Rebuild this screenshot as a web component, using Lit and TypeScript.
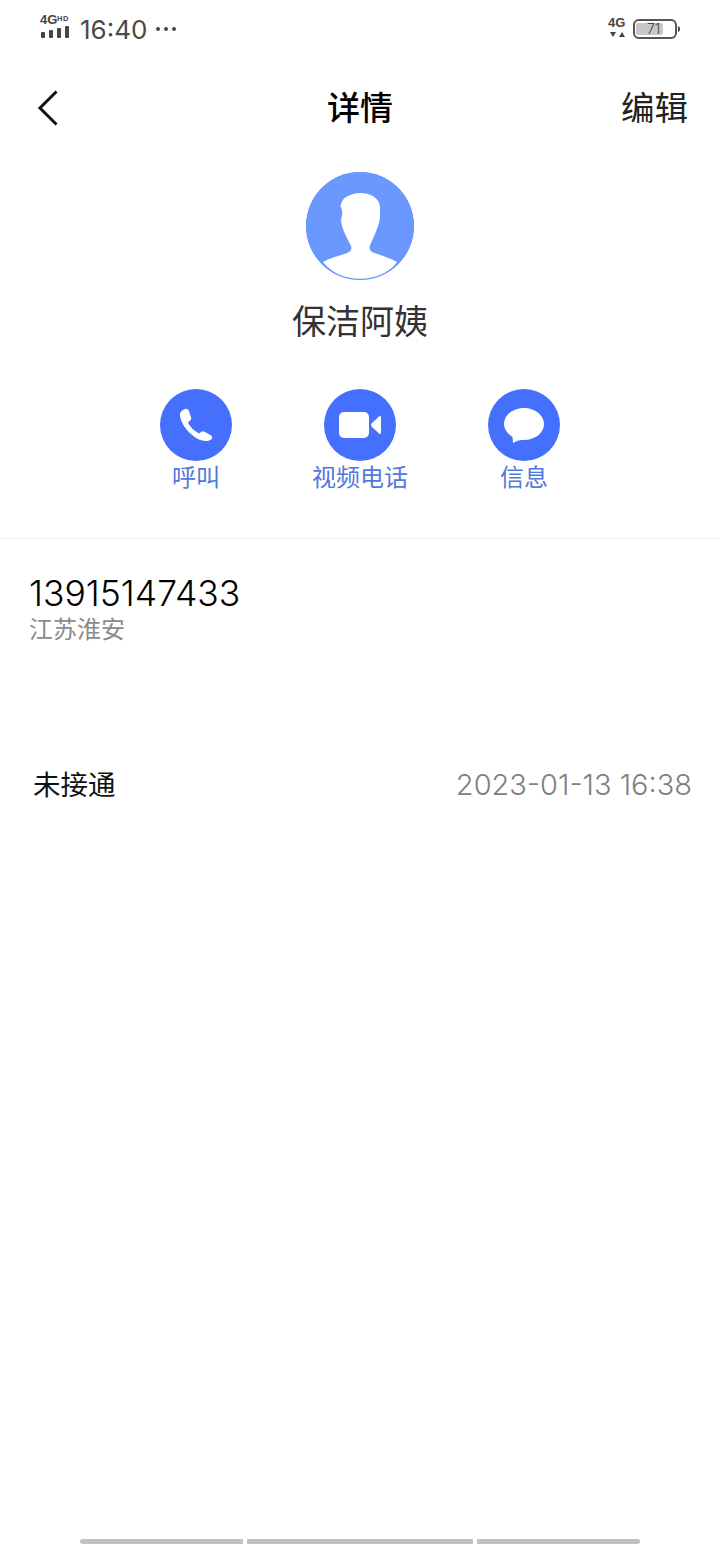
import { LitElement, html, css } from "lit";
import { customElement } from "lit/decorators.js";

@customElement("app-root")
export class AppRoot extends LitElement {
  static styles = css`
    :host {
      display: block;
      width: 720px;
      height: 1544px;
      background: #fff;
      font-family: Inter, "Noto Sans CJK SC", sans-serif;
      position: relative;
      overflow: hidden;
    }
    .status {
      height: 58px;
      display: flex;
      align-items: center;
      padding: 0 40px;
      box-sizing: border-box;
    }
    .signal {
      width: 32px;
      height: 30px;
      display: block;
      overflow: visible;
    }
    .time {
      font-size: 26px;
      font-weight: 400;
      line-height: 30px;
      margin-left: 8px;
      margin-top: 2px;
      color: #4a4a4a;
    }
    .dots {
      display: flex;
      gap: 4px;
      margin-left: 9px;
    }
    .dots i {
      width: 4px;
      height: 4px;
      border-radius: 50%;
      background: #444;
    }
    .spacer {
      flex: 1;
    }
    .net {
      width: 20px;
      height: 26px;
      display: block;
      margin-right: 5px;
      overflow: visible;
    }
    .battery {
      width: 47px;
      height: 20px;
      display: block;
      overflow: visible;
    }
    .nav {
      height: 100px;
      display: grid;
      grid-template-columns: 1fr auto 1fr;
      align-items: center;
      padding: 0 32px;
    }
    .back {
      width: 24px;
      height: 38px;
      display: block;
      margin-left: 4px;
    }
    .nav h1 {
      margin: 0;
      font-size: 33px;
      font-weight: 500;
      color: #000;
      line-height: 40px;
    }
    .edit {
      justify-self: end;
      font-size: 33.500px;
      color: #222;
      line-height: 40px;
    }
    .profile {
      display: flex;
      flex-direction: column;
      align-items: center;
      margin-top: 14px;
    }
    .avatar {
      width: 108px;
      height: 108px;
      display: block;
    }
    .name {
      font-size: 34px;
      line-height: 44px;
      margin-top: 20px;
      color: #333;
    }
    .actions {
      display: grid;
      grid-template-columns: repeat(3, 164px);
      justify-content: center;
      margin-top: 45px;
    }
    .action {
      display: flex;
      flex-direction: column;
      align-items: center;
    }
    .circle {
      width: 72px;
      height: 72px;
      display: block;
    }
    .label {
      font-size: 24px;
      line-height: 34px;
      color: #5278dc;
    }
    .divider {
      height: 1px;
      background: #eee;
      margin-top: 43px;
    }
    .number {
      padding: 36px 0 0 29px;
    }
    .phone {
      font-size: 35.500px;
      font-weight: 300;
      line-height: 38px;
      color: #000;
    }
    .place {
      font-size: 24px;
      line-height: 34px;
      color: #8a8a8a;
    }
    .record {
      display: flex;
      justify-content: space-between;
      align-items: center;
      padding: 0 28px 0 33px;
      margin-top: 118px;
      height: 40px;
    }
    .state {
      font-size: 27.500px;
      line-height: 40px;
      color: #111;
    }
    .when {
      font-size: 29px;
      font-weight: 300;
      line-height: 40px;
      color: #808080;
    }
    .home {
      position: absolute;
      left: 80px;
      top: 1539px;
      width: 560px;
      height: 5px;
      display: flex;
      gap: 4px;
    }
    .home i {
      background: #c2c2c2;
      display: block;
      height: 5px;
    }
    .home i:first-child {
      width: 163px;
      border-radius: 3px 0 0 3px;
    }
    .home i:nth-child(2) {
      width: 226px;
    }
    .home i:last-child {
      width: 163px;
      border-radius: 0 3px 3px 0;
    }
  `;

  render() {
    return html`
      <div class="status">
        <svg class="signal" viewBox="0 0 32 30">
          <text x="0" y="10" font-family="Liberation Sans" font-weight="700" font-size="13" fill="#444">4G</text>
          <text x="17" y="7" font-family="Liberation Sans" font-weight="700" font-size="7.500" letter-spacing="0.500" fill="#444">HD</text>
          <rect x="1" y="18" width="4" height="6" rx="1" fill="#444" />
          <rect x="9" y="16" width="4" height="8" rx="1" fill="#444" />
          <rect x="17" y="14" width="4" height="10" rx="1" fill="#444" />
          <rect x="25" y="12" width="4" height="12" rx="1" fill="#444" />
        </svg>
        <span class="time">16:40</span>
        <span class="dots"><i></i><i></i><i></i></span>
        <span class="spacer"></span>
        <svg class="net" viewBox="0 0 20 26">
          <text x="0" y="11" font-family="Liberation Sans" font-weight="700" font-size="13" fill="#444">4G</text>
          <path d="M2 16h6l-3 5zM14 16l3 5h-6z" fill="#444" />
        </svg>
        <svg class="battery" viewBox="0 0 47 20">
          <rect x="1" y="1" width="42" height="18" rx="5" fill="#fff" stroke="#555" stroke-width="2" />
          <rect x="3" y="4" width="27" height="12" rx="2" fill="#c8c8c8" />
          <path d="M45 7c1.500.5 2 1.500 2 3s-.5 2.500-2 3z" fill="#444" />
          <text x="14" y="15" font-family="Inter" font-weight="300" font-size="14" fill="#444">71</text>
        </svg>
      </div>

      <div class="nav">
        <svg class="back" viewBox="0 0 24 38">
          <path d="M20.500 2.500 4 19l16.500 16.500" fill="none" stroke="#111" stroke-width="3" />
        </svg>
        <h1>详情</h1>
        <span class="edit">编辑</span>
      </div>

      <div class="profile">
        <svg class="avatar" viewBox="0 0 108 108">
          <defs>
            <clipPath id="disc"><circle cx="54" cy="54" r="54" /></clipPath>
          </defs>
          <circle cx="54" cy="54" r="54" fill="#6b98fe" />
          <g clip-path="url(#disc)">
            <path
              fill="#fff"
              d="M17 90C24 86 33 84 41 81 45 80 46 77 45 74L40 64C37 58 35 52 35 47 36 45 36.500 42 36 38L34.500 34C36 28 38 26 42 24 46 22 50 21 54 21 59 21 63 22 67 24 71 27 74 30 74 36V46C73 52 71 57 69 62L65 71C63 75 63 78 66 80 74 83 84 86 91 90 84 100 70 108 54 108 38 108 25 100 17 90Z"
            />
            <circle cx="54" cy="54" r="53.500" fill="none" stroke="#6b98fe" stroke-width="1.500" />
          </g>
        </svg>
        <div class="name">保洁阿姨</div>

        <div class="actions">
          <div class="action">
            <svg class="circle" viewBox="0 0 72 72">
              <circle cx="36" cy="36" r="36" fill="#4570fd" />
              <path
                fill="#fff"
                d="M20 25C20 23 22 21 25 20 27 19.500 28 20 29 22L31 28C31.500 30 31 31 29.500 32L28 33.500C30 38 34 42 39 44.500L41 43C42 42 43.500 42 45 43L50.500 46C52 47 52.500 48 52 49.500 51 51 49 52 47 52 42 52.500 36 50 31 45 25 40 20 32 20 25Z"
              />
            </svg>
            <span class="label">呼叫</span>
          </div>
          <div class="action">
            <svg class="circle" viewBox="0 0 72 72">
              <circle cx="36" cy="36" r="36" fill="#4570fd" />
              <rect x="15" y="23" width="30" height="26" rx="5" fill="#fff" />
              <path d="M47.500 34.500 55 27.500C56 26.500 57 27 57 28.500V43.500C57 45 56 45.500 55 44.500L47.500 37.500C47 37 47 35 47.500 34.500Z" fill="#fff" />
            </svg>
            <span class="label">视频电话</span>
          </div>
          <div class="action">
            <svg class="circle" viewBox="0 0 72 72">
              <circle cx="36" cy="36" r="36" fill="#4570fd" />
              <path
                fill="#fff"
                d="M36 19C47 19 56 26 56 35S47 51 36 51C33 51 31 51 29 52L25 54 24.500 48C19.500 45 16 40 16 35 16 26 25 19 36 19Z"
              />
            </svg>
            <span class="label">信息</span>
          </div>
        </div>
      </div>

      <div class="divider"></div>

      <div class="number">
        <div class="phone">13915147433</div>
        <div class="place">江苏淮安</div>
      </div>

      <div class="record">
        <span class="state">未接通</span>
        <span class="when">2023-01-13 16:38</span>
      </div>

      <div class="home"><i></i><i></i><i></i></div>
    `;
  }
}
